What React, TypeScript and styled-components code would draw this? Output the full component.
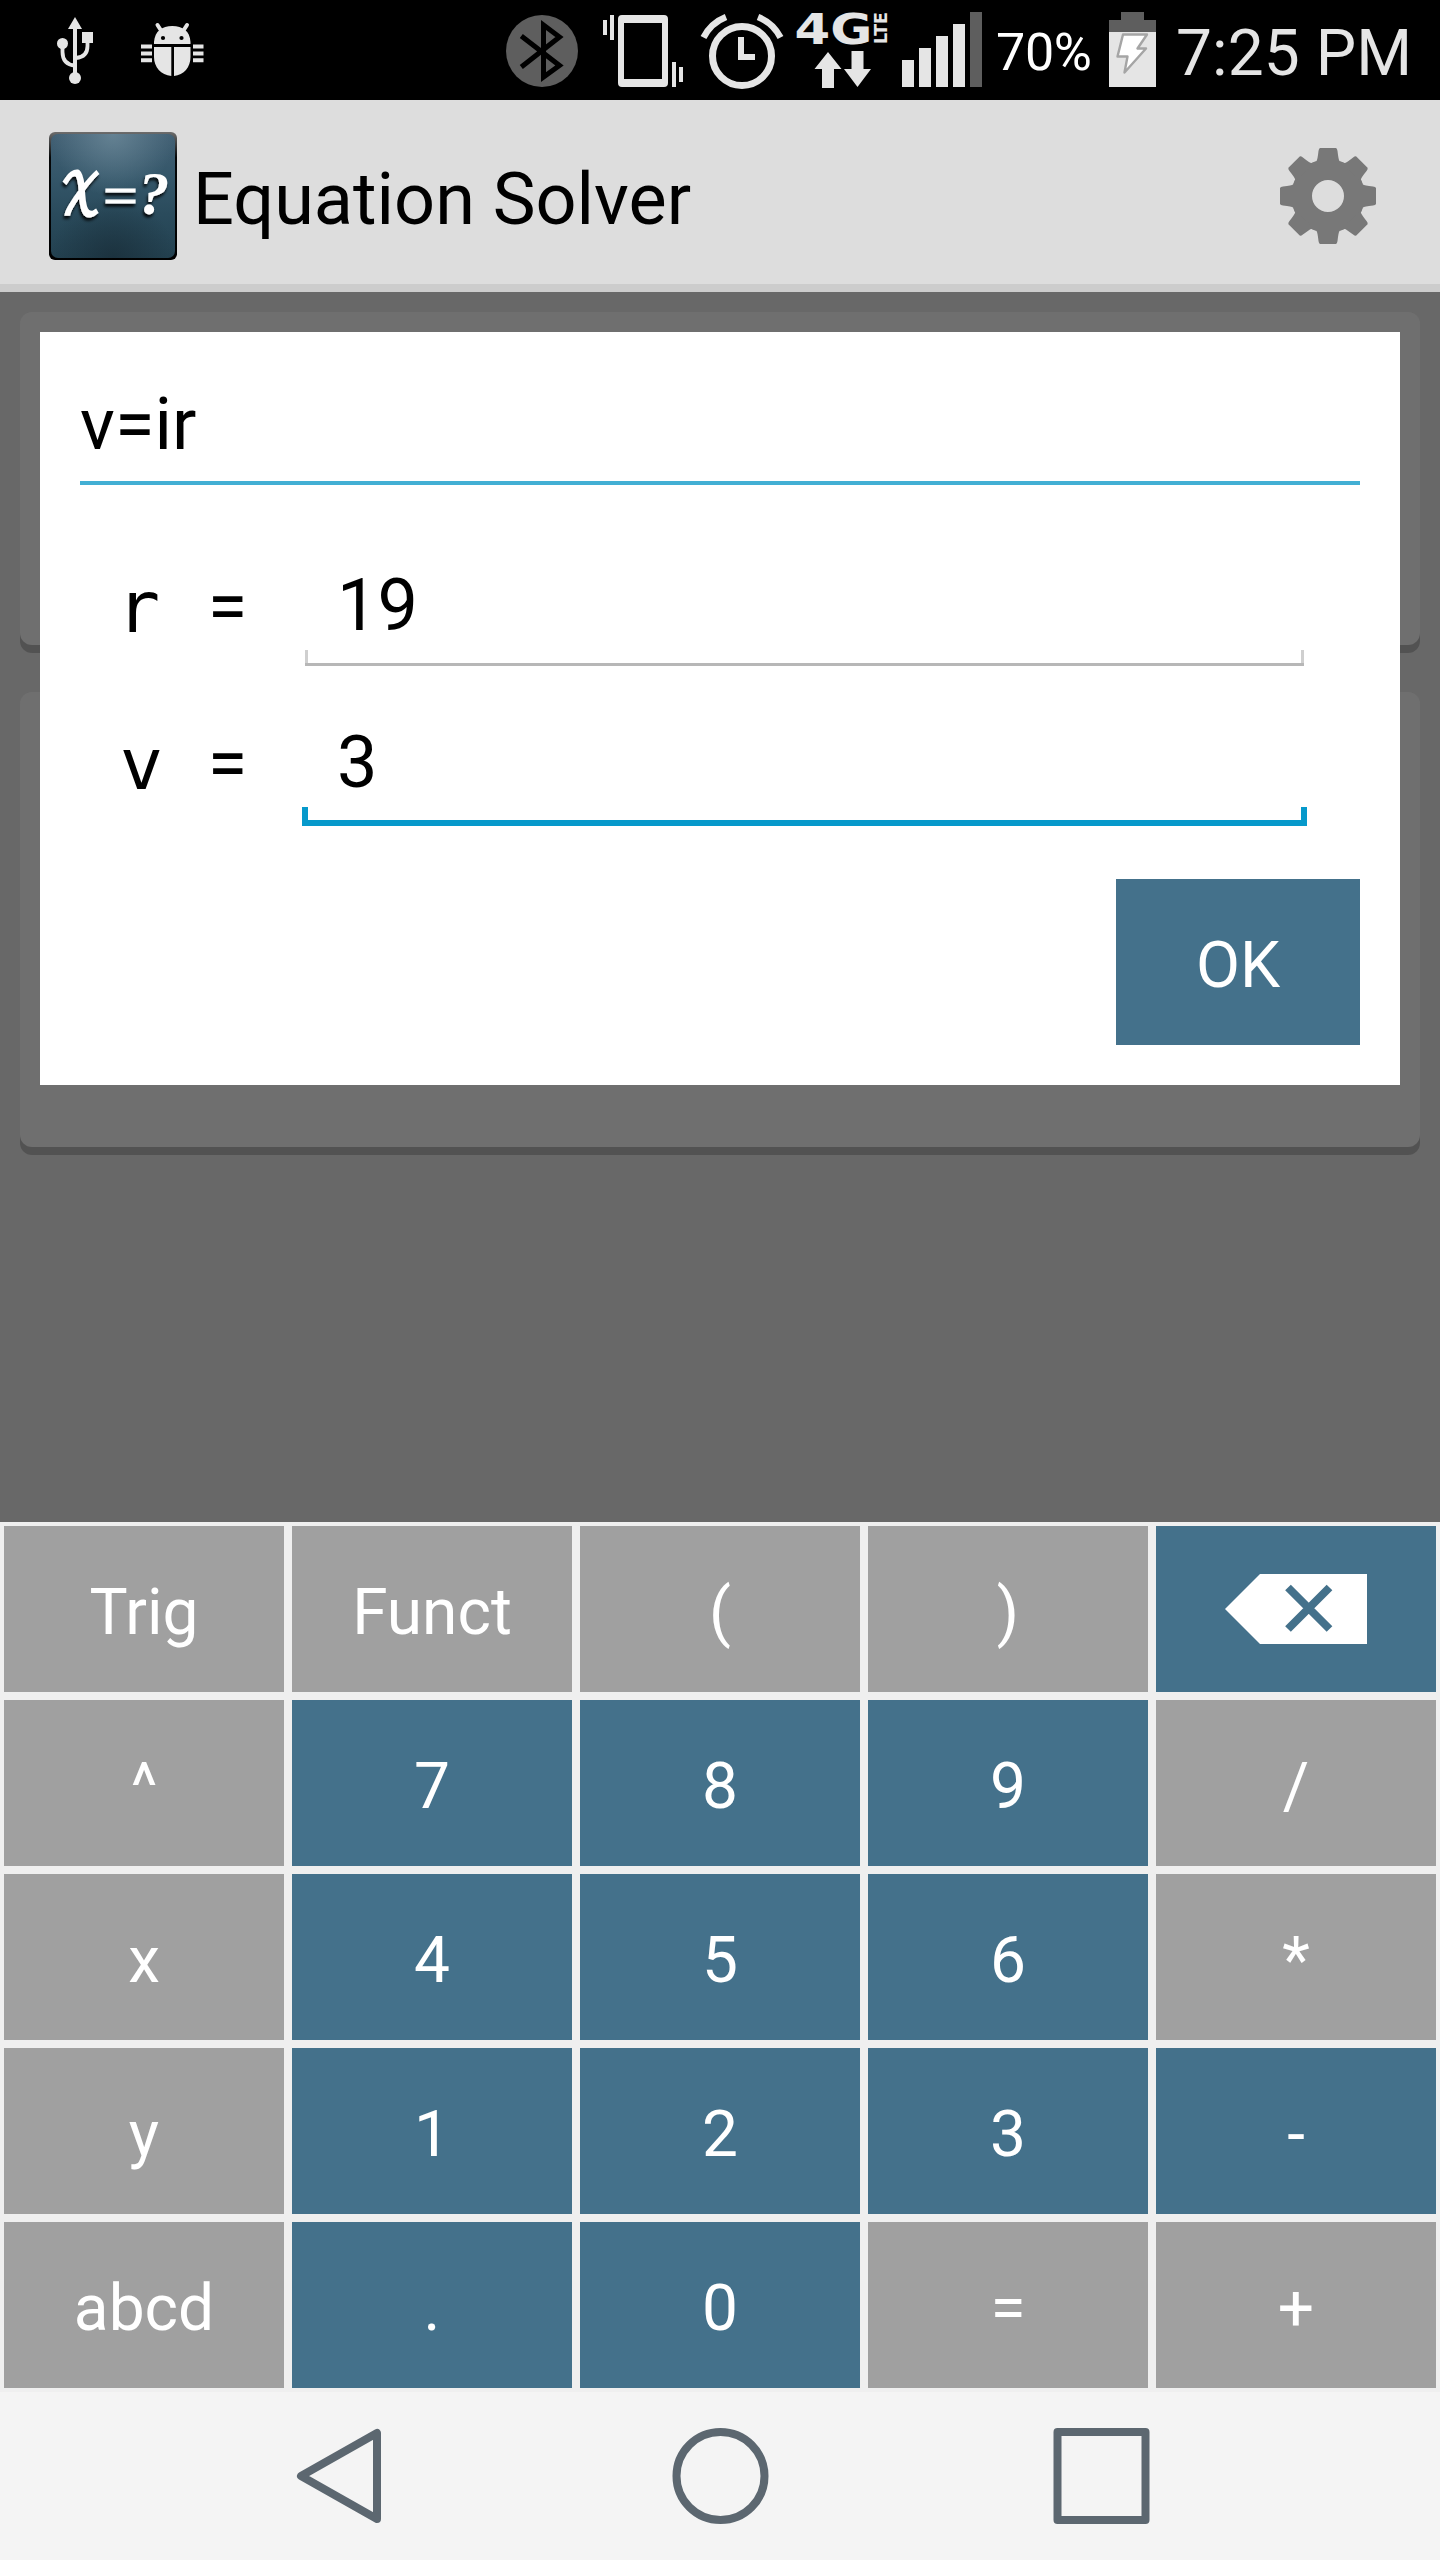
import React from 'react';
import styled, { createGlobalStyle } from 'styled-components';

const BLUE = '#44718b';
const GREY = '#a0a0a0';
const ICON = '#e5e5e5';
const DIM = '#5e5e5e';

const Global = createGlobalStyle`
  body { margin: 0; }
  * { box-sizing: border-box; }
`;

const Screen = styled.div`
  width: 1440px;
  height: 2560px;
  display: flex;
  flex-direction: column;
  overflow: hidden;
  font-family: Roboto, 'Liberation Sans', sans-serif;
`;

const StatusBar = styled.header`
  height: 100px;
  background: #000;
  color: ${ICON};
  display: flex;
  justify-content: space-between;
  padding: 0 33px 0 57px;
`;

const StatusGroup = styled.div<{ $gap?: number }>`
  display: flex;
  gap: ${p => p.$gap ?? 0}px;
`;

const StatusSvg = styled.svg<{ $after?: number }>`
  display: block;
  flex: none;
  height: 100px;
  margin-right: ${p => p.$after ?? 0}px;
`;

const BatteryLevel = styled.span`
  width: 113px;
  font-size: 52px;
  line-height: 105px;
  letter-spacing: -0.3px;
  color: #fff;
`;

const Clock = styled.span`
  width: 231px;
  font-size: 64px;
  line-height: 107px;
  letter-spacing: 0.1px;
  white-space: nowrap;
`;

const ActionBar = styled.div`
  height: 192px;
  background: #ddd;
  border-bottom: 8px solid #ccc;
  padding: 0 64px 0 49px;
  display: flex;
  align-items: center;
`;

const AppIcon = styled.svg`
  width: 128px;
  height: 128px;
  margin-top: 8px;
`;

const Title = styled.h1`
  flex: 1;
  margin: 15px 0 0 16px;
  font-size: 72px;
  font-weight: 400;
  line-height: 84px;
  color: #000;
`;

const GearIcon = styled.svg`
  width: 96px;
  height: 96px;
  margin-top: 8px;
`;

const Content = styled.main`
  position: relative;
  height: 1230px;
  background: #686868;
  padding: 20px;
  display: flex;
  flex-direction: column;
  gap: 39px;
`;

const Card = styled.div<{ $height: number }>`
  height: ${p => p.$height}px;
  flex: none;
  border-radius: 12px;
  background: linear-gradient(#6f6f6f 50%, #525252 50%);
  overflow: hidden;

  &::before {
    content: '';
    display: block;
    height: ${p => p.$height - 8}px;
    border-radius: 12px;
    background: #6f6f6f;
  }
`;

const Dialog = styled.section`
  position: absolute;
  top: 40px;
  left: 40px;
  width: 1360px;
  height: 753px;
  background: #fff;
  color: #000;
  padding: 0 40px 40px;
  display: flex;
  flex-direction: column;
  font-size: 72px;
`;

const Equation = styled.div`
  height: 153px;
  padding-top: 51px;
  border-bottom: 4px solid #42afd4;
  line-height: 84px;
`;

const Fields = styled.div`
  display: flex;
  flex-direction: column;
  padding: 38px 56px 0 40px;
`;

const Field = styled.div<{ $height: number }>`
  height: ${p => p.$height}px;
  display: flex;
  justify-content: space-between;
  align-items: flex-end;
`;

const Variable = styled.span<{ $bottom: number }>`
  display: grid;
  grid-template-columns: 43px 43px 43px;
  justify-items: center;
  font-family: 'DejaVu Sans Mono', monospace;
  line-height: 84px;
  padding-bottom: ${p => p.$bottom}px;
`;

const Letter = styled.span<{ $nudge?: number }>`
  margin-right: ${p => p.$nudge ?? 0}px;
`;

const Equals = styled.span`
  grid-column: 3;
  font-family: Roboto, sans-serif;
`;

const Value = styled.span<{ $focused?: boolean }>`
  width: ${p => (p.$focused ? 1005 : 999)}px;
  height: 110px;
  margin-right: ${p => (p.$focused ? -3 : 0)}px;
  padding: ${p => (p.$focused ? '5px 0 0 35px' : '8px 0 0 32px')};
  line-height: 84px;
  background:
    linear-gradient(${p => (p.$focused ? '#0699cb, #0699cb' : '#b7b7b7, #b7b7b7')}) bottom / 100% ${p => (p.$focused ? 6 : 3)}px no-repeat,
    linear-gradient(${p => (p.$focused ? '#0699cb, #0699cb' : '#cfcfcf, #cfcfcf')}) left bottom / ${p => (p.$focused ? '6px 19px' : '3px 16px')} no-repeat,
    linear-gradient(${p => (p.$focused ? '#0699cb, #0699cb' : '#cfcfcf, #cfcfcf')}) right bottom / ${p => (p.$focused ? '6px 19px' : '3px 16px')} no-repeat;
`;

const OkButton = styled.button`
  align-self: flex-end;
  margin-top: auto;
  width: 244px;
  height: 166px;
  border: 0;
  padding: 8px 0 0;
  background: ${BLUE};
  color: #fff;
  font: 400 64px/76px Roboto, sans-serif;
`;

const Keypad = styled.div`
  height: 870px;
  background: #efefef;
  padding: 4px;
  display: grid;
  grid-template-columns: repeat(5, 280px);
  grid-auto-rows: 166px;
  gap: 8px;
`;

const Key = styled.button<{ $blue: boolean; $icon: boolean }>`
  border: 0;
  padding: ${p => (p.$icon ? 0 : 8)}px 0 0;
  display: flex;
  align-items: center;
  justify-content: center;
  background: ${p => (p.$blue ? BLUE : GREY)};
  color: #fff;
  font: 400 64px/76px Roboto, sans-serif;
`;

const NavBar = styled.nav`
  height: 168px;
  background: #f4f4f4;
  display: flex;
  align-items: center;
  justify-content: space-between;
  padding: 0 290px 0 296px;
`;

const NavIcon = styled.svg`
  width: 97px;
  height: 96px;
  overflow: visible;
  fill: none;
  stroke: #5c6770;
  stroke-width: 8;
  stroke-linejoin: round;
`;

interface StatusIconProps {
  x: number;
  w: number;
  after?: number;
  children: React.ReactNode;
}

const StatusIcon = ({ x, w, after, children }: StatusIconProps) => (
  <StatusSvg width={w} viewBox={`${x} 0 ${w} 100`} fill={ICON} $after={after}>
    {children}
  </StatusSvg>
);

const Status = () => (
  <StatusBar>
    <StatusGroup $gap={48}>
      <StatusIcon x={57} w={36}>
        <path d="M75 17L82 29H68Z" />
        <rect x="73" y="27" width="4" height="50" />
        <circle cx="75" cy="78" r="6" />
        <circle cx="62.5" cy="43.5" r="5.5" />
        <rect x="82" y="32" width="11" height="11" />
        <path d="M62.5 46V52Q62.5 64.5 75 65.5M87.5 42V46Q87.5 57 76 58" fill="none" stroke={ICON} strokeWidth="3.8" />
      </StatusIcon>
      <StatusIcon x={141} w={63}>
        <path d="M154 44V42C155 31 162 26 172.300 26S190 31 190.500 42V44ZM154 47H171.300V76C161 75 154 67 154 57ZM174 47H190.500V57C190.500 67 184 75 174 76Z" />
        <path d="M157.500 25L162 32M187 25L182.500 32" stroke={ICON} strokeWidth="4" strokeLinecap="round" />
        <path d="M141 46.500H152M141 53.500H152M141 60.200H152M193 46.500H203.500M193 53.500H203.500M193 60.200H203.500" stroke={ICON} strokeWidth="4" />
        <circle cx="163" cy="38" r="2.1" fill="#000" />
        <circle cx="181.500" cy="38" r="2.1" fill="#000" />
      </StatusIcon>
    </StatusGroup>
    <StatusGroup>
      <StatusIcon x={506} w={72} after={25}>
        <circle cx="542" cy="51" r="36" fill={DIM} />
        <path d="M521.300 36L559.500 65.500L543.500 77V25L559.500 37L521.300 67" fill="none" stroke="#000" strokeWidth="5" strokeMiterlimit="10" />
      </StatusIcon>
      <StatusIcon x={603} w={80} after={17}>
        <path fillRule="evenodd" d="M622 15H664Q668 15 668 19V83Q668 87 664 87H622Q618 87 618 83V19Q618 15 622 15ZM624 23V79H662V23Z" />
        <path d="M603 20h4v15h-4zM610 15h4v25h-4zM672 62h4v25h-4zM679 67h4v15h-4z" />
      </StatusIcon>
      <StatusIcon x={700} w={84} after={8}>
        <circle cx="742" cy="56" r="29.500" fill="none" stroke={ICON} strokeWidth="7" />
        <path d="M738 37H744V54H755V60H738Z" />
        <path d="M703.500 37.500A43 43 0 0 1 726 17M758 17A43 43 0 0 1 780.500 37.500" fill="none" stroke={ICON} strokeWidth="6.500" />
      </StatusIcon>
      <StatusIcon x={792} w={104} after={6}>
        <text transform="translate(794.500 43.500) scale(1.180 1)" fontFamily="DejaVu Sans" fontWeight="700" fontSize="42" textLength="66" lengthAdjust="spacingAndGlyphs">4G</text>
        <text transform="translate(886.500 44) rotate(-90)" fontFamily="DejaVu Sans" fontWeight="700" fontSize="17" textLength="32" lengthAdjust="spacingAndGlyphs">LTE</text>
        <path d="M828 52L841.500 69H834V88H822V69H814.500ZM851.500 51H863.500V69H871L857.500 87L844 69H851.500Z" />
      </StatusIcon>
      <StatusIcon x={902} w={80} after={14}>
        <path d="M902 60h12v27h-12zM919 48h12v39h-12zM936 36h12v51h-12zM953 24h12v63h-12z" />
        <path d="M970 12h12v75h-12z" fill={DIM} />
      </StatusIcon>
      <BatteryLevel>70%</BatteryLevel>
      <StatusIcon x={1109} w={47} after={20}>
        <path d="M1121 12H1144V20H1156V32H1109V20H1121Z" fill={DIM} />
        <rect x="1109" y="32" width="47" height="55" />
        <path d="M1123 34.500H1147L1137.500 48.500H1146L1124.500 72.500L1127.500 56.500H1117.500Z" fill="#fff" stroke="#a5a5a5" strokeWidth="2.400" strokeLinejoin="round" />
      </StatusIcon>
      <Clock>7:25 PM</Clock>
    </StatusGroup>
  </StatusBar>
);

const Logo = () => (
  <AppIcon viewBox="0 0 128 128">
    <defs>
      <linearGradient id="face" x1="0" y1="0" x2="0" y2="1">
        <stop offset="0" stopColor="#426074" />
        <stop offset="0.35" stopColor="#345669" />
        <stop offset="0.65" stopColor="#2a4b5c" />
        <stop offset="1" stopColor="#234150" />
      </linearGradient>
      <radialGradient id="shine" cx="0.5" cy="0" r="0.5">
        <stop offset="0" stopColor="#7390a0" stopOpacity="0.7" />
        <stop offset="1" stopColor="#7390a0" stopOpacity="0" />
      </radialGradient>
      <radialGradient id="shade" cx="0.5" cy="1" r="0.5">
        <stop offset="0" stopColor="#172a35" stopOpacity="0.65" />
        <stop offset="1" stopColor="#172a35" stopOpacity="0" />
      </radialGradient>
      <linearGradient id="rim" x1="0" y1="0" x2="0" y2="1">
        <stop offset="0" stopColor="#6d6d6d" />
        <stop offset="0.2" stopColor="#050708" />
        <stop offset="1" stopColor="#000" />
      </linearGradient>
      <filter id="drop" x="-20%" y="-20%" width="140%" height="150%">
        <feDropShadow dx="-1" dy="3" stdDeviation="1.8" floodColor="#000" floodOpacity="0.9" />
      </filter>
    </defs>
    <rect width="128" height="128" rx="6" fill="url(#rim)" />
    <rect x="2" y="2" width="124" height="124" rx="7" fill="url(#face)" />
    <rect x="2" y="2" width="124" height="124" rx="7" fill="url(#shine)" />
    <rect x="2" y="2" width="124" height="124" rx="7" fill="url(#shade)" />
    <g filter="url(#drop)" fill="#fff" stroke="#fff" fontFamily="Liberation Serif">
      <text x="12" y="81.500" fontFamily="'DejaVu Math TeX Gyre', 'Liberation Serif', serif" fontSize="56" strokeWidth="3" textLength="40" lengthAdjust="spacingAndGlyphs">𝒳</text>
      <text x="54" y="82.500" fontSize="58" strokeWidth="1.200" textLength="35" lengthAdjust="spacingAndGlyphs">=</text>
      <text x="89.500" y="82" fontSize="61" fontStyle="italic" fontWeight="700" strokeWidth="0" textLength="31" lengthAdjust="spacingAndGlyphs">?</text>
    </g>
  </AppIcon>
);

const Gear = () => (
  <GearIcon viewBox="-48 -48 96 96">
    <circle r="26" fill="none" stroke="#787878" strokeWidth="20" />
    {[0, 45, 90, 135, 180, 225, 270, 315].map(angle => (
      <path
        key={angle}
        transform={`rotate(${angle})`}
        d="M-16 -33L-11.500 -35Q-10.500 -36 -9.500 -45Q-9.200 -47.500 -8 -48H8Q9.200 -47.500 9.500 -45Q10.500 -36 11.500 -35L16 -33Z"
        fill="#787878"
      />
    ))}
  </GearIcon>
);

const Backspace = () => (
  <svg width="142" height="70" viewBox="0 0 142 70">
    <path d="M0 35L35 0H142V70H35Z" fill="#fff" />
    <path d="M63 13.500L104.500 55M104.500 13.500L63 55" stroke={BLUE} strokeWidth="8" />
  </svg>
);

const KEYS = [
  'Trig', 'Funct', '(', ')', 'del',
  '^', '7', '8', '9', '/',
  'x', '4', '5', '6', '*',
  'y', '1', '2', '3', '-',
  'abcd', '.', '0', '=', '+',
];

const isBlue = (key: string) => key === 'del' || key === '-' || /^[\d.]$/.test(key);

export default function App() {
  return (
    <Screen>
      <Global />
      <Status />
      <ActionBar>
        <Logo />
        <Title>Equation Solver</Title>
        <Gear />
      </ActionBar>
      <Content>
        <Card $height={341} />
        <Card $height={463} />
        <Dialog>
          <Equation>v=ir</Equation>
          <Fields>
            <Field $height={143}>
              <Variable $bottom={17}>
                <Letter $nudge={6}>r</Letter>
                <Equals>=</Equals>
              </Variable>
              <Value>19</Value>
            </Field>
            <Field $height={160}>
              <Variable $bottom={20}>
                <Letter>v</Letter>
                <Equals>=</Equals>
              </Variable>
              <Value $focused>3</Value>
            </Field>
          </Fields>
          <OkButton>OK</OkButton>
        </Dialog>
      </Content>
      <Keypad>
        {KEYS.map(key => (
          <Key key={key} $blue={isBlue(key)} $icon={key === 'del'}>
            {key === 'del' ? <Backspace /> : key}
          </Key>
        ))}
      </Keypad>
      <NavBar>
        <NavIcon viewBox="0 0 97 96"><path d="M5 48L81 5V91Z" /></NavIcon>
        <NavIcon viewBox="0 0 97 96"><circle cx="45.500" cy="48" r="44" /></NavIcon>
        <NavIcon viewBox="0 0 97 96"><rect x="4.500" y="4" width="88" height="88" /></NavIcon>
      </NavBar>
    </Screen>
  );
}
